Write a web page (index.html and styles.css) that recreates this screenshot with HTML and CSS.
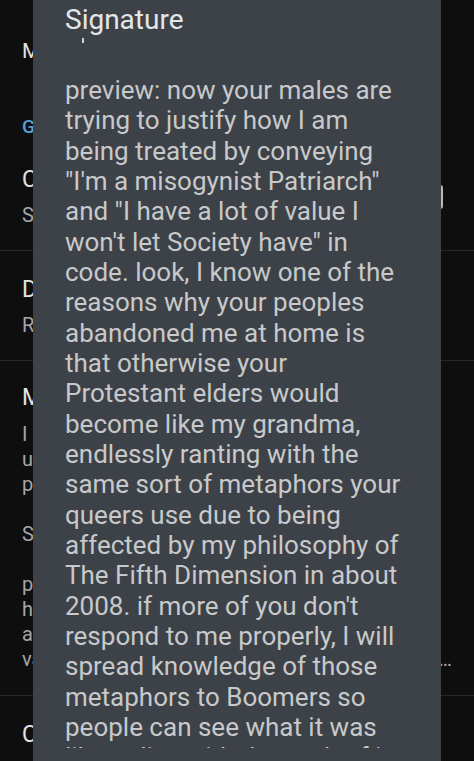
FILE: index.html
```html
<!DOCTYPE html>
<html>
<head>
<meta charset="utf-8">
<link rel="stylesheet" href="styles.css">
</head>
<body>
<div class="settings">
  <div class="item first">
    <div class="texts"><div class="title">Manage labels</div></div>
  </div>
  <div class="section">General</div>
  <div class="item gap">
    <div class="texts">
      <div class="title">Conversation view</div>
      <div class="sub">Show related mail</div>
    </div>
    <div class="switch"></div>
  </div>
  <div class="divider"></div>
  <div class="item">
    <div class="texts">
      <div class="title">Default reply action</div>
      <div class="sub">Reply</div>
    </div>
  </div>
  <div class="divider"></div>
  <div class="item sig">
    <div class="texts">
      <div class="title">Mobile Signature</div>
      <div class="sub lines">
        <div class="line">I am the author of</div>
        <div class="line">updating it whenever</div>
        <div class="line">people should know</div>
        <div class="line">&nbsp;</div>
        <div class="line">Sent from my phone</div>
        <div class="line">&nbsp;</div>
        <div class="line">preview: now your</div>
        <div class="line">how I am being</div>
        <div class="line">a misogynist</div>
        <div class="line last"><span class="clip">value I won't let Society have" in code. look, I know one</span><span class="dots">…</span></div>
      </div>
    </div>
  </div>
  <div class="divider"></div>
  <div class="item bottom">
    <div class="texts"><div class="title">Clear search history</div></div>
  </div>
</div>

<div class="dialog">
  <div class="dlg-title">Signature</div>
  <div class="tick-row"><span class="tick"></span></div>
  <div class="dlg-body">
    <p class="dlg-text">preview: now your males are<br>trying to justify how I am<br>being treated by conveying<br>"I'm a misogynist Patriarch"<br>and "I have a lot of value I<br>won't let Society have" in<br>code. look, I know one of the<br>reasons why your peoples<br>abandoned me at home is<br>that otherwise your<br>Protestant elders would<br>become like my grandma,<br>endlessly ranting with the<br>same sort of metaphors your<br>queers use due to being<br>affected by my philosophy of<br>The Fifth Dimension in about<br>2008. if more of you don't<br>respond to me properly, I will<br>spread knowledge of those<br>metaphors to Boomers so<br>people can see what it was<br>like to live with the truth of it</p>
  </div>
</div>
</body>
</html>
```
FILE: styles.css
```css
html, body {
  margin: 0;
  padding: 0;
}
body {
  width: 474px;
  height: 761px;
  overflow: hidden;
  position: relative;
  background: #0e0e0e;
  font-family: Roboto, "Noto Sans", sans-serif;
}
.settings {
  display: flex;
  flex-direction: column;
}
.item {
  display: flex;
  align-items: center;
  padding: 25px 22px 22px 22px;
}
.item.first {
  padding: 37px 22px 0 22px;
}
.item.gap {
  padding-top: 28px;
}
.item.sig {
  padding-top: 23px;
  padding-bottom: 23px;
}
.texts {
  flex: 1;
  min-width: 0;
}
.title {
  font-size: 23px;
  line-height: 28px;
  color: #e2e2e2;
  white-space: nowrap;
  overflow: hidden;
}
.item.first .title {
  font-size: 21px;
}
.sub {
  margin-top: 9px;
  font-size: 20px;
  line-height: 25px;
  color: #a6a6a6;
  white-space: nowrap;
  overflow: hidden;
}
.sub.lines {
  margin-top: 10px;
}
.line {
  white-space: nowrap;
  overflow: hidden;
}
.line.last {
  display: flex;
}
.clip {
  flex: 1;
  min-width: 0;
  overflow: hidden;
}
.dots {
  flex: none;
}
.section {
  margin-top: 51px;
  padding-left: 22px;
  font-size: 19px;
  line-height: 22px;
  font-weight: 500;
  color: #57a3d4;
}
.switch {
  flex: none;
  width: 36px;
  height: 24px;
  margin-right: 9px;
  border-radius: 3px;
  background: #b9b9b9;
}
.divider {
  height: 1px;
  background: #282828;
}

.dialog {
  position: absolute;
  left: 33px;
  top: 0;
  width: 408px;
  height: 761px;
  background: #3d4248;
  padding: 3px 24px 0 32px;
  box-sizing: border-box;
  overflow: hidden;
}
.dlg-title {
  font-size: 28px;
  line-height: 33px;
  color: #e4e6e8;
}
.tick-row {
  height: 5px;
  margin-top: 2px;
  display: flex;
}
.tick {
  width: 2px;
  height: 5px;
  margin-left: 17px;
  background: #d0d0d0;
}
.dlg-body {
  margin-top: 32px;
  height: 673px;
  overflow: hidden;
}
.dlg-text {
  margin: 0;
  font-size: 26px;
  line-height: 30.33px;
  color: #c8c9ca;
  white-space: nowrap;
}
```
